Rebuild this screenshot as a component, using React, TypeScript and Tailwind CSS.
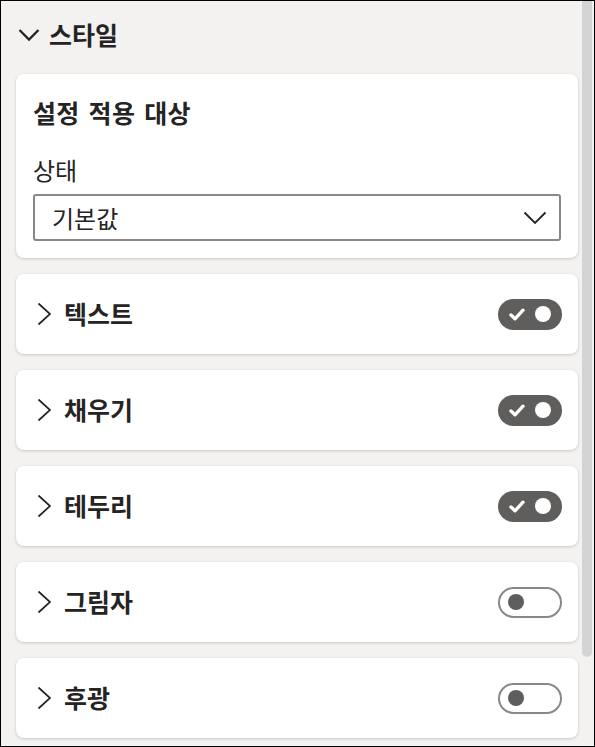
import React from 'react';

const FONT = { fontFamily: '"Segoe UI", "Noto Sans CJK KR", "Noto Sans", sans-serif' };

function Toggle({ on }: { on: boolean }) {
  if (on) {
    return (
      <div className="flex h-[31px] w-[64px] items-center justify-between rounded-full bg-[#605e5c] pl-[11px] pr-[11px]">
        <svg width="16" height="13" viewBox="0 0 16 13">
          <path d="M2 7 L6 10.8 L14 2.2" fill="none" stroke="white" strokeWidth="3.4" strokeLinecap="round" strokeLinejoin="round" />
        </svg>
        <div className="h-[16px] w-[16px] rounded-full bg-white" />
      </div>
    );
  }
  return (
    <div className="flex h-[31px] w-[64px] items-center rounded-full border-2 border-[#8a8886] bg-white pl-[8px]">
      <div className="h-[16px] w-[16px] rounded-full bg-[#605e5c]" />
    </div>
  );
}

function Section({ label, on }: { label: string; on: boolean }) {
  return (
    <div className="flex h-[80px] items-center rounded-[8px] bg-white pl-[21px] pr-[16px] shadow-[0_1px_3px_rgba(0,0,0,0.18)]">
      <svg width="15" height="24" viewBox="0 0 15 24" className="shrink-0">
        <path d="M1.5 1.5 L13 12 L1.5 22.5" fill="none" stroke="#252423" strokeWidth="1.7" />
      </svg>
      <span className="ml-[12px] flex-1 text-[25px] font-bold text-[#252423]">{label}</span>
      <Toggle on={on} />
    </div>
  );
}

export default function App() {
  const sections = [
    { label: '텍스트', on: true },
    { label: '채우기', on: true },
    { label: '테두리', on: true },
    { label: '그림자', on: false },
    { label: '후광', on: false },
  ];

  return (
    <div style={FONT} className="flex h-[747px] w-[595px] overflow-hidden border border-black bg-[#f3f2f1]">
      <div className="flex-1 pl-[15px] pr-[4px]">
        {/* 헤더 */}
        <div className="flex h-[68px] items-center pl-[2px]">
          <svg width="22" height="14" viewBox="0 0 22 14">
            <path d="M1.5 2 L11 11.5 L20.5 2" fill="none" stroke="#252423" strokeWidth="2.3" />
          </svg>
          <span className="ml-[9px] text-[25px] font-bold text-[#252423]">스타일</span>
        </div>

        <div className="flex flex-col gap-[16px] pt-[5px]">
          {/* 설정 적용 대상 */}
          <div className="rounded-[8px] bg-white px-[17px] pb-[17px] pt-[23px] shadow-[0_1px_3px_rgba(0,0,0,0.18)]">
            <div className="h-[30px] text-[25px] font-bold leading-[30px] tracking-[0.3px] text-[#252423] [word-spacing:3px]">설정 적용 대상</div>
            <div className="mt-[28px] h-[30px] text-[24px] leading-[30px] text-[#252423]">상태</div>
            <div className="mt-[9px] flex h-[47px] items-center justify-between rounded-[3px] border-2 border-[#8a8886] pl-[17px] pr-[12px]">
              <span className="text-[24px] text-[#252423]">기본값</span>
              <svg width="24" height="14" viewBox="0 0 24 14">
                <path d="M1.5 1.5 L12 12 L22.5 1.5" fill="none" stroke="#252423" strokeWidth="1.8" />
              </svg>
            </div>
          </div>

          {sections.map((s) => (
            <Section key={s.label} label={s.label} on={s.on} />
          ))}
        </div>
      </div>

      {/* 스크롤바 */}
      <div className="w-[12px] pr-[2px]">
        <div className="h-[656px] w-[10px] rounded-b-[5px] bg-[#d4d4d4]" />
      </div>
    </div>
  );
}
